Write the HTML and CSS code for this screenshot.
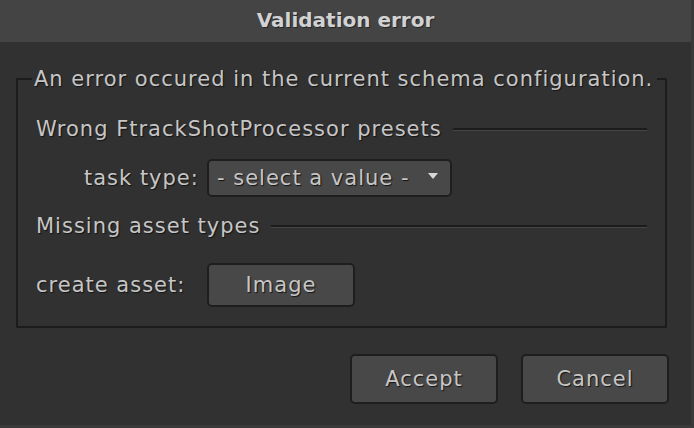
FILE: index.html
```html
<!DOCTYPE html>
<html lang="en">
<head>
    <meta charset="UTF-8">
    <meta name="viewport" content="width=device-width, initial-scale=1.0">
    <title>Validation error</title>
    <link rel="stylesheet" href="styles.css">
</head>
<body>
    <div class="dialog">
        <div class="titlebar">Validation error</div>
        <div class="content">
            <fieldset class="group">
                <legend>An error occured in the current schema configuration.</legend>

                <div class="group-body">
                    <div class="section section-first">
                        <span>Wrong FtrackShotProcessor presets</span>
                        <span class="rule"></span>
                    </div>
                    <div class="field field-select">
                        <label class="label label-indent">task type:</label>
                        <div class="select">
                            <span>- select a value -</span>
                            <span class="arrow"></span>
                        </div>
                    </div>

                    <div class="section section-second">
                        <span>Missing asset types</span>
                        <span class="rule"></span>
                    </div>
                    <div class="field field-button">
                        <label class="label">create asset:</label>
                        <button class="btn btn-image">Image</button>
                    </div>
                </div>
            </fieldset>

            <div class="actions">
                <button class="btn btn-action">Accept</button>
                <button class="btn btn-action">Cancel</button>
            </div>
        </div>
    </div>
</body>
</html>
```

FILE: styles.css
```css
body {
    margin: 0;
    background-color: #3a3a3a;
    font-family: "DejaVu Sans", "Liberation Sans", sans-serif;
    color: #c6c6c6;
}

.dialog {
    width: 691px;
    height: 425px;
    background: #313131;
    display: flex;
    flex-direction: column;
}

.titlebar {
    height: 42px;
    background: #444444;
    text-align: center;
    font-weight: bold;
    font-size: 20px;
    line-height: 40px;
    color: #d2d2d2;
    text-shadow: 1px 1px 0 #262626;
}

.content {
    padding: 25px 22px 0 16px;
    font-size: 21px;
    letter-spacing: 1px;
    text-shadow: 1px 1px 1px #141414;
}

.group {
    box-sizing: border-box;
    width: 651px;
    margin: 0;
    padding: 0 0 19px 0;
    border: 2px solid #1c1c1c;
    border-radius: 1px;
}

.group legend {
    margin-left: 14px;
    padding: 0 4px 0 2px;
    line-height: 24px;
    white-space: nowrap;
}

.group-body {
    padding: 0 18px;
}

.section {
    display: flex;
    align-items: center;
    height: 24px;
}

.section-first {
    margin-top: 26px;
}

.section-second {
    margin-top: 17px;
}

.rule {
    flex: 1;
    margin-left: 11px;
    border-top: 2px solid #1c1c1c;
    border-bottom: 1px solid #444444;
}

.field {
    display: flex;
    align-items: center;
}

.field-select {
    margin-top: 18px;
}

.field-button {
    margin-top: 25px;
}

.label {
    width: 171px;
    box-sizing: border-box;
}

.label-indent {
    padding-left: 48px;
}

.select {
    box-sizing: border-box;
    width: 245px;
    height: 38px;
    display: flex;
    align-items: center;
    justify-content: space-between;
    padding: 0 12px 0 8px;
    background: #484848;
    border: 2px solid #1e1e1e;
    border-radius: 5px;
}

.arrow {
    width: 0;
    height: 0;
    border-left: 5px solid transparent;
    border-right: 5px solid transparent;
    border-top: 6px solid #d8d8d8;
    margin-bottom: 4px;
}

.btn {
    box-sizing: border-box;
    font-family: inherit;
    font-size: 21px;
    letter-spacing: 1px;
    color: #c6c6c6;
    text-shadow: 1px 1px 1px #141414;
    background: #484848;
    border: 2px solid #1e1e1e;
    border-radius: 5px;
    padding: 0;
}

.btn-image {
    width: 148px;
    height: 44px;
}

.actions {
    display: flex;
    justify-content: flex-end;
    gap: 23px;
    margin-top: 26px;
}

.btn-action {
    width: 148px;
    height: 50px;
}
```
